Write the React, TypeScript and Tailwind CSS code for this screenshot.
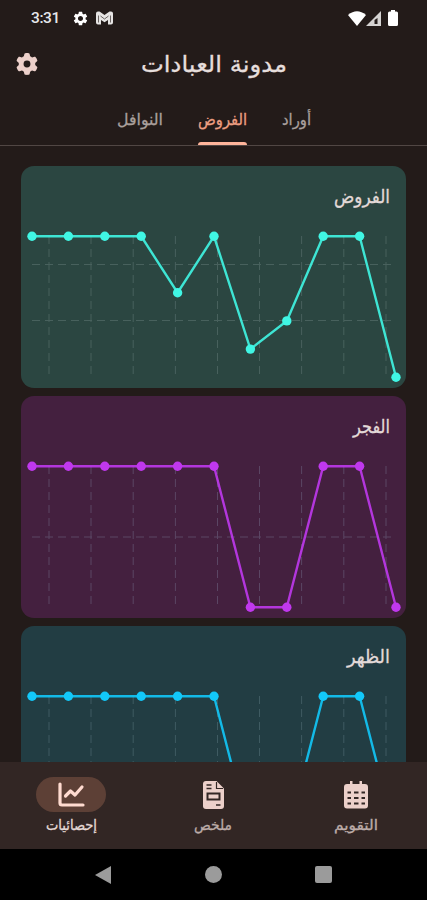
import React from 'react';
import { FaGear } from 'react-icons/fa6';
import { MdSettings } from 'react-icons/md';

interface ChartCardProps {
    title: string;
    titleWidth: number;
    color: string;
    background: string;
    grid: string;
    values: number[];
    rows: number[];
}

const CHARTS: ChartCardProps[] = [
    {
        title: 'الفروض',
        titleWidth: 56,
        color: '#40f6e4',
        background: '#2b4641',
        grid: '#48615d',
        values: [5, 5, 5, 5, 3, 5, 1, 2, 5, 5, 0],
        rows: [98.5, 154.5],
    },
    {
        title: 'الفجر',
        titleWidth: 37,
        color: '#c038ee',
        background: '#44203f',
        grid: '#5b4664',
        values: [5, 5, 5, 5, 5, 5, 0, 0, 5, 5, 0],
        rows: [141],
    },
    {
        title: 'الظهر',
        titleWidth: 43,
        color: '#12c8fa',
        background: '#223d43',
        grid: '#3f5b62',
        values: [5, 5, 5, 5, 5, 5, 0, 0, 5, 5, 0],
        rows: [141],
    },
];

const COLUMNS = [28, 70, 112.2, 154.4, 196.5, 238.5, 280.6, 322.8, 365];

// Arabic label squeezed to a fixed width so that every label keeps its place
const Label: React.FC<{ text: string; width: number; size: number; height: number }> = ({ text, width, size, height }) => (
    <svg width={width} height={height} className="block overflow-visible" direction="rtl">
        <text x={width} y={height * 0.7} fontSize={size} fill="currentColor" stroke="currentColor" strokeWidth="0.3" textLength={width} lengthAdjust="spacingAndGlyphs">
            {text}
        </text>
    </svg>
);

const StatusBar: React.FC = () => (
    <div className="flex h-9 items-center pl-[31px] pr-[29px] text-white">
        <span className="w-[29px] pt-0.5 font-['Roboto'] text-[15.5px] font-medium tracking-tight text-gray-200">3:31</span>
        <MdSettings className="ml-3 size-[17px]" />
        <svg className="ml-[7px] h-3.5 w-[17px]" viewBox="0 0 17 14" fill="#e6e4e3">
            <path d="M0 2.500Q0 .5 2 .5h1.500l5 3.500 5-3.500H15q2 0 2 2v9q0 2-2 2h-3V9l-3.500 2.200L5 9v4.500H2q-2 0-2-2Z" />
            <path d="M2.500 4.500v7M14.500 4.500v7M4.500 5l4 3 4-3" fill="none" stroke="#5c5655" strokeWidth="0.9" />
        </svg>
        <div className="ml-auto flex items-center">
            <svg width="18" height="15" viewBox="0 0 18 15" fill="currentColor">
                <path d="M0 4Q9-3.500 18 4L9 15Z" />
            </svg>
            <svg width="16" height="15" viewBox="0 0 16 15">
                <path d="M0 15L15 0V15Z" fill="#d5d3d2" />
                <path d="M8.500 9l3-2v6h-3z" fill="#231b19" />
            </svg>
            <svg className="ml-1.5" width="10" height="16" viewBox="0 0 10 16" fill="currentColor">
                <path d="M3 0h4v1.500h1.500Q10 1.500 10 3v11.500Q10 16 8.500 16h-7Q0 16 0 14.500V3Q0 1.500 1.500 1.500H3Z" />
            </svg>
        </div>
    </div>
);

const ChartCard: React.FC<ChartCardProps> = ({ title, titleWidth, color, background, grid, values, rows }) => {
    const points = values.map((v, i) => ({ x: 11 + i * 36.4, y: 211.3 - v * 28.2 }));

    return (
        <section className="h-[222px] shrink-0 rounded-[13px]" style={{ background }}>
            <div className="flex h-[60px] justify-end pr-4 pt-4 text-[#e3dad8]">
                <Label text={title} width={titleWidth} size={19} height={30} />
            </div>
            <svg className="block" width="386" height="162" viewBox="0 60 386 162">
                <g stroke={grid} strokeDasharray="8 5" fill="none">
                    {COLUMNS.map((x) => <path key={x} d={`M${x} 70V211`} />)}
                    {rows.map((y) => <path key={y} d={`M11 ${y}H375`} />)}
                </g>
                <polyline points={points.map((p) => `${p.x},${p.y}`).join(' ')} fill="none" stroke={color} strokeWidth="2.4" opacity="0.9" />
                {points.map((p) => <circle key={p.x} cx={p.x} cy={p.y} r="4.7" fill={color} />)}
            </svg>
        </section>
    );
};

const App: React.FC = () => {
    return (
        <div className="flex h-[900px] w-[427px] flex-col overflow-hidden bg-[#231b19] font-['DejaVu_Sans',sans-serif]">
            <StatusBar />
            <header className="grid h-14 grid-cols-[141px_1fr] items-center text-[#e6dedc]">
                <FaGear className="ml-4 size-[22px] text-[#ecd0ca]" />
                <div className="pt-0.5">
                    <Label text="مدونة العبادات" width={146} size={23} height={34} />
                </div>
            </header>
            <nav className="flex h-[54px] justify-center gap-[35px] border-b border-[#514744] pl-px pt-[13px] text-[#aaa09d]">
                <Label text="النوافل" width={46} size={16} height={28} />
                <div className="flex w-[49px] flex-col justify-between text-[#ee9f82]">
                    <Label text="الفروض" width={49} size={16} height={28} />
                    <span className="h-[3px] rounded-t bg-[#ffb59b]" />
                </div>
                <Label text="أوراد" width={29} size={16} height={28} />
            </nav>
            <main className="flex min-h-0 flex-1 flex-col gap-2 overflow-hidden px-[21px] pt-5">
                {CHARTS.map((chart) => <ChartCard key={chart.title} {...chart} />)}
            </main>
            <footer className="grid h-[87px] shrink-0 grid-cols-3 bg-[#322624] pt-[15px] text-[#bcaca8]">
                <div className="flex flex-col items-center text-[#e5d9d6]">
                    <span className="flex h-[35px] w-[70px] items-center justify-center rounded-full bg-[#5d4036] text-[#ffdbd0]">
                        <svg width="27" height="25" viewBox="0 0 27 25" fill="none" stroke="currentColor" strokeWidth="3.2" strokeLinecap="round" strokeLinejoin="round">
                            <path d="M2 2v19q0 2 2 2h21" />
                            <path d="M7.500 14l5-5 4.500 4 7-8" />
                        </svg>
                    </span>
                    <Label text="إحصائيات" width={51} size={14} height={26} />
                </div>
                <div className="flex flex-col items-center">
                    <span className="flex h-[35px] items-center text-[#ecd0ca]">
                        <svg width="21" height="28" viewBox="0 0 21 28" fill="currentColor">
                            <path d="M3 0h10.500L21 7.500V25q0 3-3 3H3q-3 0-3-3V3Q0 0 3 0Z" />
                            <g fill="none" stroke="#322624">
                                <path d="M13.500 1v6.500H20" strokeWidth="1.200" />
                                <path d="M3.500 4h5M3.500 7.500h5M13 24h4.500" strokeWidth="1.500" />
                                <path d="M4.500 12.500h12v6h-12z" strokeWidth="2" />
                            </g>
                        </svg>
                    </span>
                    <Label text="ملخص" width={38} size={14} height={26} />
                </div>
                <div className="flex flex-col items-center">
                    <span className="flex h-[35px] items-center text-[#ecd0ca]">
                        <svg width="24" height="28" viewBox="0 0 24 28" fill="currentColor">
                            <path d="M6 0h2.500v3h7V0H18v3h3q3 0 3 3v18.500q0 3-3 3H3q-3 0-3-3V6q0-3 3-3h3Z" />
                            <path d="M3.500 11.500h3.500m3 0h4.500m3 0H21M3.500 17h3.500m3 0h4.500m3 0H21M3.500 22.500h3.500m3 0h4.500m3 0H21" stroke="#322624" strokeWidth="2.200" />
                        </svg>
                    </span>
                    <Label text="التقويم" width={44} size={14} height={26} />
                </div>
            </footer>
            <div className="flex h-[51px] shrink-0 items-center justify-between bg-black pl-[95px] pr-[95px] text-[#9b9b9b]">
                <svg width="16" height="18" viewBox="0 0 16 18" fill="currentColor"><path d="M0 9L16 0v18Z" /></svg>
                <span className="ml-px size-[17px] rounded-full bg-current" />
                <span className="size-[17px] rounded-xs bg-current" />
            </div>
        </div>
    );
};

export default App;
